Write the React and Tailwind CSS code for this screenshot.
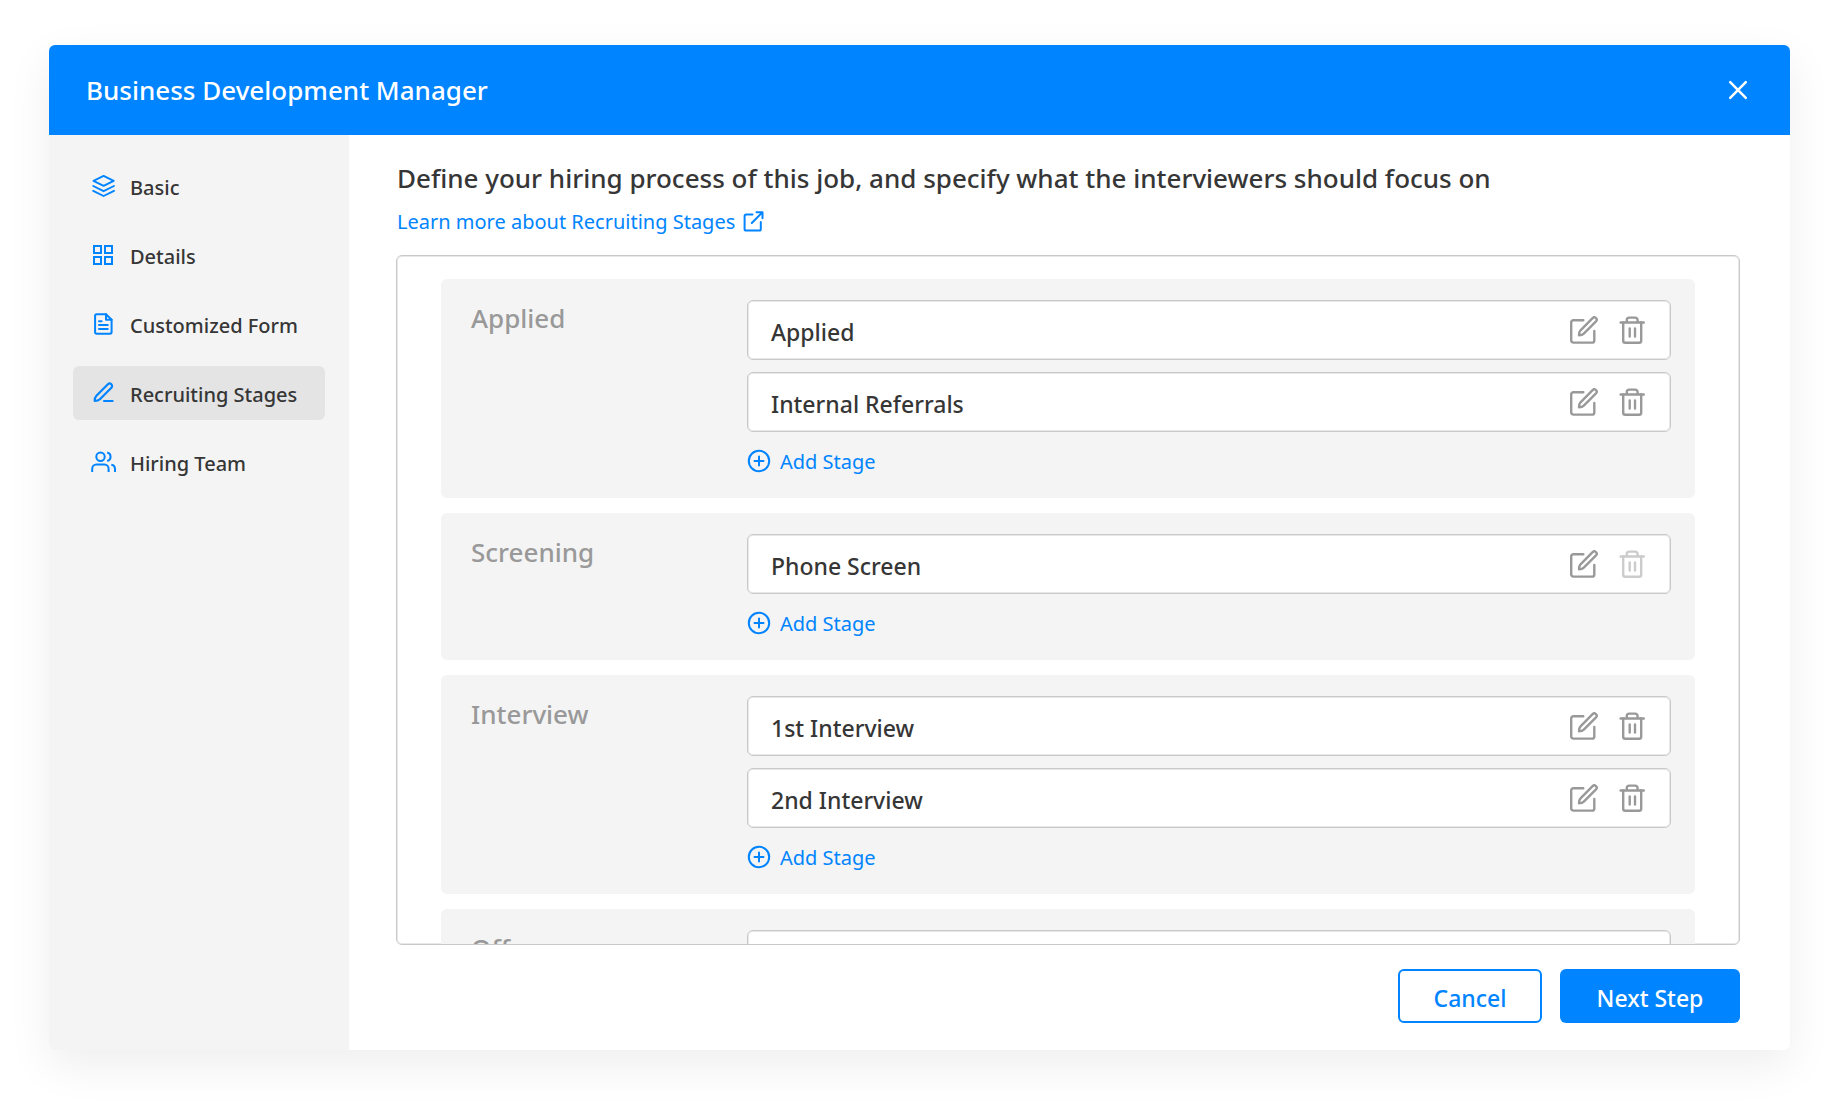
const ICON = {
  fill: "none",
  stroke: "currentColor",
  strokeLinecap: "round",
  strokeLinejoin: "round",
  "aria-hidden": true,
};

function NavIcon({ children, ...rest }) {
  return (
    <svg viewBox="0 0 26 26" className="size-[26px] shrink-0 text-[#0084ff]" {...ICON} strokeWidth="2.2" {...rest}>
      {children}
    </svg>
  );
}

const LayersIcon = () => (
  <NavIcon strokeWidth="1.9">
    <path d="M12.600 2.900 22.700 7.800 12.600 12.800 2.500 7.800Z" />
    <path d="M2.200 13 12.600 18.200 23 13" />
    <path d="M2.200 17.800 12.600 23 23 17.800" />
  </NavIcon>
);

const GridIcon = () => (
  <NavIcon strokeLinejoin="miter" strokeWidth="2">
    <path d="M3 4h7v7H3zM14 4h7v7h-7zM3 15h7v7H3zM14 15h7v7h-7z" />
  </NavIcon>
);

const FormIcon = () => (
  <NavIcon strokeWidth="2">
    <path d="M15 3.300H5.700a1.600 1.600 0 0 0-1.600 1.600v16.200a1.600 1.600 0 0 0 1.600 1.600H19a1.600 1.600 0 0 0 1.600-1.600V8.800Z" />
    <path d="M15 3.300v5.500h5.600" />
    <path d="M8 10.300h2.600M8 14h8.800M8 18h8.800" />
  </NavIcon>
);

const PenIcon = () => (
  <NavIcon>
    <path d="M3.700 21c0-2.400.3-3.900 1.700-5.300L16.900 4.300a2.400 2.400 0 0 1 3.500 3.400L8.900 19.200c-1.400 1.400-2.900 1.800-5.200 1.800Z" />
    <path d="M13 21h8.600" />
  </NavIcon>
);

const TeamIcon = () => (
  <NavIcon strokeLinecap="butt" strokeWidth="2">
    <circle cx="9.500" cy="7.700" r="4.200" />
    <path d="M1.200 23v-3.200a4.200 4.200 0 0 1 4.200-4.200h8a4.200 4.200 0 0 1 4.200 4.200V23" />
    <path d="M16.200 3.500a4.300 4.300 0 0 1 0 8.400M20.300 15.700a4.300 4.300 0 0 1 3.700 4.200V23" />
  </NavIcon>
);

const EditIcon = () => (
  <svg viewBox="0 0 28 28" className="size-7" {...ICON} strokeWidth="2.400">
    <path d="M13.300 4.200H3.400a2.200 2.200 0 0 0-2.200 2.200v18a2.200 2.200 0 0 0 2.200 2.200h18.700a2.200 2.200 0 0 0 2.200-2.200V15" />
    <path d="M9 19.300c0-2.300.3-3.700 1.500-4.900L22.600 2.100a2.200 2.200 0 0 1 3.400 3.200L13.800 17.700c-1.200 1.200-2.600 1.600-4.800 1.600Z" />
  </svg>
);

const TrashIcon = () => (
  <svg viewBox="0 0 28 28" className="size-7" {...ICON} strokeWidth="2.400">
    <path d="M2.600 6.500h23.200M8.800 6.500V4a2.400 2.400 0 0 1 2.400-2.400h6a2.400 2.400 0 0 1 2.400 2.400v2.500" />
    <path d="M5.200 6.500v18.300a2 2 0 0 0 2 2h14a2 2 0 0 0 2-2V6.500M11.700 12.500v8.100M17 12.500v8.100" />
  </svg>
);

const NAV = [
  { label: "Basic", Icon: LayersIcon },
  { label: "Details", Icon: GridIcon },
  { label: "Customized Form", Icon: FormIcon },
  { label: "Recruiting Stages", Icon: PenIcon, current: true },
  { label: "Hiring Team", Icon: TeamIcon },
];

const GROUPS = [
  { name: "Applied", stages: [{ name: "Applied" }, { name: "Internal Referrals" }] },
  { name: "Screening", stages: [{ name: "Phone Screen", locked: true }] },
  { name: "Interview", stages: [{ name: "1st Interview" }, { name: "2nd Interview" }] },
  { name: "Offer", stages: [{ name: "Offer" }] },
];

function Stage({ name, locked }) {
  return (
    <li className="flex h-[60px] items-center rounded-md border border-[#c9c9c9] bg-white pl-[23px] pr-6 shadow-[inset_0_0_0_1px_#e8e8e8]">
      <span className="flex-1 pt-1 text-[23px] leading-8 font-medium">{name}</span>
      <button type="button" aria-label={`Edit ${name}`} className="mr-5 text-[#999]">
        <EditIcon />
      </button>
      <button
        type="button"
        aria-label={`Delete ${name}`}
        disabled={locked}
        className="text-[#999] disabled:text-[#ccc]"
      >
        <TrashIcon />
      </button>
    </li>
  );
}

function Group({ name, stages }) {
  return (
    <section className="flex shrink-0 rounded-md bg-[#f4f4f4] pt-[21px] pr-6 pb-5 pl-[30px]">
      <h3 className="w-[276px] shrink-0 text-[26px] leading-9 font-medium text-[#999]">{name}</h3>
      <div className="flex-1">
        <ul className="flex flex-col gap-3">
          {stages.map((s) => (
            <Stage key={s.name} {...s} />
          ))}
        </ul>
        <button type="button" className="mt-3 flex h-[34px] items-center gap-[9px] text-[20px] leading-8 text-[#0084ff]">
          <svg viewBox="0 0 24 24" className="size-6" {...ICON} strokeWidth="2">
            <circle cx="12" cy="12" r="10.200" />
            <path d="M12 7.500v9M7.500 12h9" />
          </svg>
          <span className="pt-0.5">Add Stage</span>
        </button>
      </div>
    </section>
  );
}

export default function App() {
  return (
    <div className="flex h-screen min-h-[600px] bg-white pt-[45px] pr-12 pb-[61px] pl-[49px] font-['Noto_Sans',sans-serif] text-[#363636]">
      <div
        role="dialog"
        aria-labelledby="dialog-title"
        className="flex min-w-0 flex-1 flex-col overflow-hidden rounded-md bg-white shadow-[0_15px_45px_rgba(0,0,0,0.07)]"
      >
        <header className="flex h-[90px] shrink-0 items-center justify-between bg-[#0084ff] pr-10 pl-[37px] text-white">
          <h1 id="dialog-title" className="text-[26px] leading-9 font-medium">
            Business Development Manager
          </h1>
          <button type="button" aria-label="Close">
            <svg viewBox="0 0 24 24" className="size-6" {...ICON} strokeWidth="2.500">
              <path d="m4.200 4.200 15.600 15.600M19.800 4.200 4.200 19.800" />
            </svg>
          </button>
        </header>
        <div className="flex min-h-0 flex-1">
          <nav className="flex w-[300px] shrink-0 flex-col gap-[15px] bg-[#f4f4f4] p-6">
            {NAV.map(({ label, Icon, current }) => (
              <a
                key={label}
                href="#"
                aria-current={current ? "step" : undefined}
                className="flex h-[54px] items-center gap-[13px] rounded-md pl-[18px] text-[20px] leading-8 font-medium aria-[current=step]:bg-[#e4e4e4]"
              >
                <Icon />
                <span className="pt-1">{label}</span>
              </a>
            ))}
          </nav>
          <main className="flex min-w-0 flex-1 flex-col pt-[25px] pr-[50px] pb-[27px] pl-[47px]">
            <h2 className="pl-px text-[26px] leading-9 font-medium">
              Define your hiring process of this job, and specify what the interviewers should focus on
            </h2>
            <a href="#" className="mt-2.5 flex items-center gap-2 self-start pl-px text-[20px] leading-8 text-[#0084ff]">
              Learn more about Recruiting Stages
              <svg viewBox="0 0 21 22" className="h-[22px] w-[21px]" {...ICON} strokeWidth="2">
                <path d="M9.500 3.500H3.200A1.600 1.600 0 0 0 1.600 5.100v12.800a1.600 1.600 0 0 0 1.600 1.600h13a1.600 1.600 0 0 0 1.600-1.600V11" />
                <path d="M13.500 1.200h6v6M19.300 1.400 8.800 12" />
              </svg>
            </a>
            <div className="mt-[17px] flex min-h-0 flex-1 flex-col gap-[15px] overflow-y-auto rounded-md border border-[#c9c9c9] px-11 py-[23px] shadow-[inset_0_0_0_1px_#e8e8e8] [scrollbar-width:none]">
              {GROUPS.map((g) => (
                <Group key={g.name} {...g} />
              ))}
            </div>
            <div className="mt-6 flex shrink-0 justify-end gap-[18px] text-[23px] leading-8 font-medium">
              <button type="button" className="h-[54px] w-36 rounded-md border-2 border-[#0084ff] pt-1 text-[#0084ff]">
                Cancel
              </button>
              <button type="button" className="h-[54px] w-[180px] rounded-md bg-[#0084ff] pt-1 text-white">
                Next Step
              </button>
            </div>
          </main>
        </div>
      </div>
    </div>
  );
}
